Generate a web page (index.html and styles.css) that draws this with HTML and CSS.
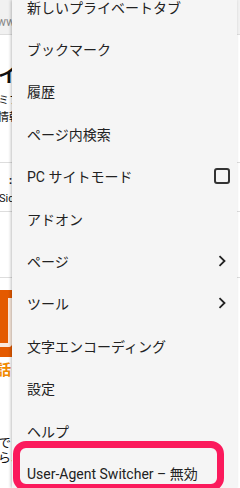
FILE: index.html
```html
<!DOCTYPE html>
<html lang="ja">
<head>
    <meta charset="UTF-8">
    <meta name="viewport" content="width=device-width, initial-scale=1.0">
    <link rel="stylesheet" href="styles.css">
    <title>メニュー</title>
</head>
<body>
    <div class="page">
        <div class="urlbar">www</div>
        <div class="article-head">
            <div class="headline">イ</div>
            <div class="lead">ミフ</div>
            <div class="lead">情幹</div>
        </div>
        <div class="meta">
            <div class="meta-dot">:</div>
            <div class="meta-name">Sid</div>
        </div>
        <div class="gap"></div>
        <div class="banner">
            <div class="banner-logo"></div>
        </div>
        <div class="banner-title">話そ</div>
        <div class="body-text">
            <p>でフ</p>
            <p>ら、</p>
        </div>
    </div>

    <div class="menu">
        <ul class="menu-list">
            <li class="menu-item">新しいプライベートタブ</li>
            <li class="menu-item">ブックマーク</li>
            <li class="menu-item">履歴</li>
            <li class="menu-item">ページ内検索</li>
            <li class="menu-item">PC サイトモード <span class="checkbox"></span></li>
            <li class="menu-item">アドオン</li>
            <li class="menu-item">ページ
                <svg class="chevron" width="8" height="12" viewBox="0 0 8 12"><path d="M1.5 1.2l5 4.8-5 4.8" fill="none" stroke="#222" stroke-width="1.8"/></svg>
            </li>
            <li class="menu-item">ツール
                <svg class="chevron" width="8" height="12" viewBox="0 0 8 12"><path d="M1.5 1.2l5 4.8-5 4.8" fill="none" stroke="#222" stroke-width="1.8"/></svg>
            </li>
            <li class="menu-item">文字エンコーディング</li>
            <li class="menu-item">設定</li>
            <li class="menu-item">ヘルプ</li>
            <li class="menu-item">User-Agent Switcher – 無効</li>
        </ul>
    </div>

    <!-- highlight drawn over the last item -->
    <div class="highlight"></div>
</body>
</html>
```

FILE: styles.css
```css
body {
    margin: 0;
    width: 240px;
    height: 488px;
    overflow: hidden;
    position: relative;
    background: #fff;
    font-family: "Roboto", "Noto Sans CJK JP", sans-serif;
}

.page {
    width: 240px;
    color: #111;
}

.urlbar {
    height: 35px;
    background: #f1f1f1;
    border-bottom: 1px solid #ddd;
    box-sizing: border-box;
    color: #888;
    font-size: 12px;
    line-height: 14px;
    padding-top: 15px;
    text-indent: -3px;
}

.article-head {
    height: 128px;
    border-bottom: 1px solid #ddd;
    box-sizing: border-box;
    padding-top: 28px;
}

.headline {
    font-size: 20px;
    font-weight: bold;
    line-height: 26px;
    margin-left: -2px;
    margin-bottom: 3px;
}

.lead {
    font-size: 11px;
    line-height: 17px;
    margin-left: -2px;
}

.meta {
    height: 49px;
    border-bottom: 1px solid #ddd;
    box-sizing: border-box;
    padding-top: 9px;
    font-size: 11px;
    line-height: 18px;
}

.meta-dot {
    padding-left: 9px;
    font-weight: bold;
}

.meta-name {
    margin-left: -1px;
}

.gap {
    height: 66px;
    border-bottom: 1px solid #ddd;
    box-sizing: border-box;
}

.banner {
    width: 200px;
    height: 67px;
    margin-top: 12px;
    background: #e45a00;
    position: relative;
}

.banner-logo {
    position: absolute;
    left: 0;
    top: 8px;
    width: 8px;
    height: 45px;
    border: 4px solid #fbe9dc;
    border-top: none;
    border-left: none;
    border-radius: 0 0 4px 0;
}

.banner-title {
    color: #f18a00;
    font-size: 15px;
    font-weight: bold;
    line-height: 26px;
    margin-left: -4px;
}

.body-text {
    padding-top: 52px;
    font-size: 13px;
    line-height: 15px;
}

.body-text p {
    margin: 0 0 0 -2px;
}

.menu {
    position: absolute;
    left: 12px;
    top: 0;
    width: 225px;
    height: 488px;
    overflow: hidden;
    background: #f5f5f5;
    box-shadow: -1px 0 3px rgba(0, 0, 0, 0.25);
}

.menu-list {
    list-style: none;
    margin: -14.5px 0 0 0;
    padding: 0;
}

.menu-item {
    height: 42.4px;
    display: flex;
    align-items: center;
    justify-content: space-between;
    padding: 0 7px 0 15px;
    font-size: 14px;
    color: #222;
}

.checkbox {
    width: 12px;
    height: 12px;
    border: 2px solid #333;
    border-radius: 3px;
}

.chevron {
    margin-right: 4px;
}

.highlight {
    position: absolute;
    left: 13px;
    top: 441px;
    width: 211px;
    height: 50px;
    box-sizing: border-box;
    border: 7px solid #fb1a5c;
    border-radius: 13px;
}
```
